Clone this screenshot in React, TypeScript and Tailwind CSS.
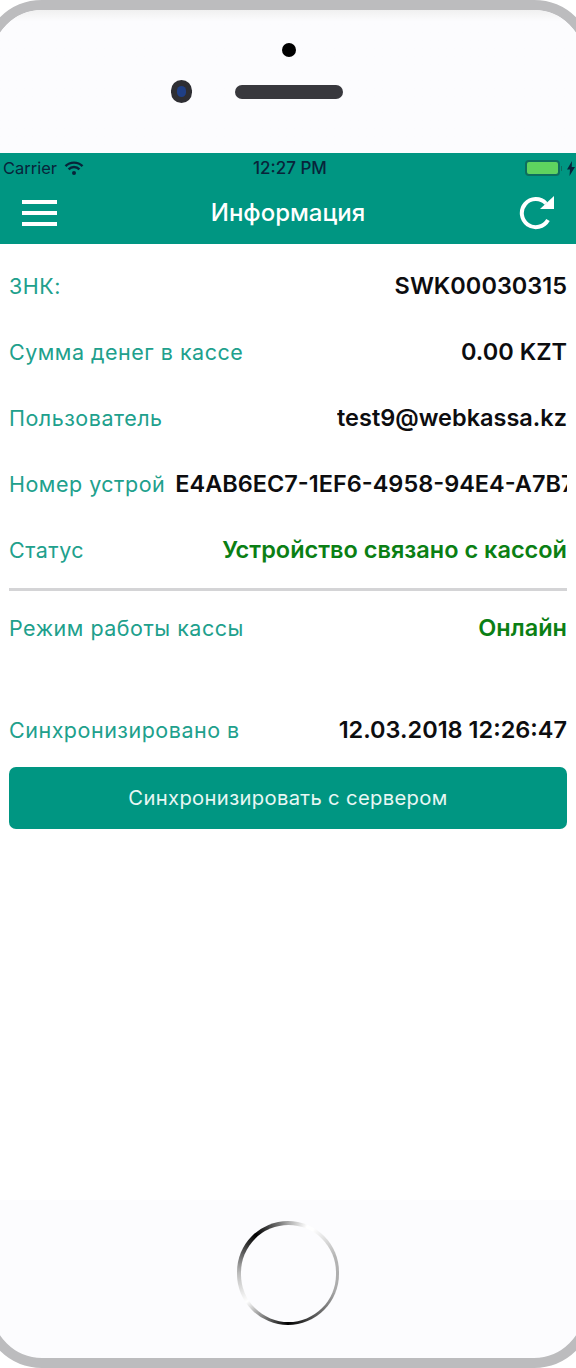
import React from 'react';

interface InfoRow {
  label: string;
  value: string;
  valueClass?: string;
}

const topRows: InfoRow[] = [
  { label: 'ЗНК:', value: 'SWK00030315' },
  { label: 'Сумма денег в кассе', value: '0.00 KZT' },
  { label: 'Пользователь', value: 'test9@webkassa.kz' },
  { label: 'Номер устрой', value: 'E4AB6EC7-1EF6-4958-94E4-A7B7C1D2' },
  { label: 'Статус', value: 'Устройство связано с кассой', valueClass: 'text-[#0b7f14]' },
];

const Row: React.FC<InfoRow> = ({ label, value, valueClass = 'text-[#0d0d0f]' }) => (
  <div className="flex h-[66px] items-center justify-between gap-2.5 px-[9px]">
    <span className="shrink-0 whitespace-nowrap text-[21.5px] tracking-[0.5px] text-[#20a08c]">{label}</span>
    <span className={`min-w-0 overflow-hidden whitespace-nowrap text-[23.5px] font-semibold ${valueClass}`}>{value}</span>
  </div>
);

export default function App() {
  return (
    <div className="h-[1368px] w-[576px] overflow-hidden bg-white font-['Inter',sans-serif]">
      {/* phone frame runs past the window on both sides */}
      <div className="-mx-[18px] flex h-[1368px] flex-col overflow-hidden rounded-[60px] border-[10px] border-[#bcbcbe] bg-[#fcfcfe]">
        <div className="mx-[8px] flex h-[143px] shrink-0 flex-col items-center bg-gradient-to-b from-[#f0f0f0] to-[#fcfcfe] to-[8%]">
          <div className="ml-[2px] mt-[33px] h-[14px] w-[14px] rounded-full bg-black" />
          <div className="ml-[2px] mt-[23px] flex items-center">
            <div className="-ml-[64px] mr-[43px] flex h-[23px] w-[21px] items-center justify-center rounded-full bg-[#2e2e33]">
              <div className="h-[11px] w-[9px] rounded-full bg-[#1f3f86]" />
            </div>
            <div className="h-[14px] w-[108px] rounded-full bg-[#38383d]" />
          </div>
        </div>

        <div className="mx-[8px] shrink-0 bg-[#009682]">
          <div className="relative flex h-[30px] items-center justify-between pl-[3px] pr-px text-[#08243a]">
            <div className="flex items-center gap-[7px]">
              <span className="text-[16.5px]">Carrier</span>
              <svg width="20" height="15" viewBox="0 0 20 15" fill="none" stroke="currentColor" strokeWidth="2.4">
                <path d="M1.5 5.2a12 12 0 0 1 17 0" />
                <path d="M4.6 8.3a7.6 7.6 0 0 1 10.8 0" />
                <circle cx="10" cy="12" r="2" fill="currentColor" stroke="none" />
              </svg>
            </div>
            <span className="absolute left-[253px] top-[3px] text-[17px] font-medium">12:27 PM</span>
            <div className="flex items-center">
              <div className="h-[16px] w-[35px] rounded-[4px] border-2 border-[#0d6e5f] bg-[#5fd35f]" />
              <div className="ml-px mr-[5px] h-[5px] w-[1px] bg-[#0d6e5f]" />
              <svg width="8" height="15" viewBox="0 0 8 15" fill="currentColor">
                <path d="M5 0 0 8.5h3L2.5 15 8 6H4.7z" />
              </svg>
            </div>
          </div>
          <div className="relative flex h-[61px] items-center justify-between pb-[2px] pl-[22px] pr-[21px] text-white">
            <div className="flex w-[35px] flex-col gap-[7px]">
              <div className="h-[4px] bg-white" />
              <div className="h-[4px] bg-white" />
              <div className="h-[4px] bg-white" />
            </div>
            <span className="text-[24px] font-medium">Информация</span>
            <svg width="36" height="34" viewBox="0 0 36 34" fill="none">
              <path d="M27 7.5A14 14 0 1 0 29 24" stroke="currentColor" strokeWidth="4" />
              <path d="M35 0v13H21z" fill="currentColor" />
            </svg>
          </div>
        </div>

        <div className="mx-[8px] h-[956px] shrink-0 bg-white pt-[9px]">
          {topRows.map(row => (
            <Row key={row.label} {...row} />
          ))}
          <div className="mx-[9px] mt-[5px] h-[3px] bg-[#d4d4d6]" />
          <div className="mt-[4px]">
            <Row label="Режим работы кассы" value="Онлайн" valueClass="text-[#0b7f14]" />
          </div>
          <div className="mt-[36px]">
            <Row label="Синхронизировано в" value="12.03.2018 12:26:47" />
          </div>
          <button className="mx-[9px] mt-[4px] flex h-[62px] w-[558px] items-center justify-center rounded-[7px] bg-[#009682] pt-px text-[20.2px] tracking-[0.35px] text-[#e8f7f4]">
            Синхронизировать с сервером
          </button>
        </div>
      </div>
      <div className="relative -mt-[147px] flex justify-center">
        <div className="h-[104px] w-[102px] rounded-full bg-[conic-gradient(#aaa_0deg,#fff_22deg,#fff_30deg,#b5b5b5_70deg,#aaa_110deg,#555_150deg,#000_180deg,#999_215deg,#fff_235deg,#bbb_270deg,#333_305deg,#000_320deg,#777_350deg,#aaa_360deg)] p-[3.5px]">
          <div className="h-full w-full rounded-full bg-[#fcfcfe]" />
        </div>
      </div>
    </div>
  );
}
